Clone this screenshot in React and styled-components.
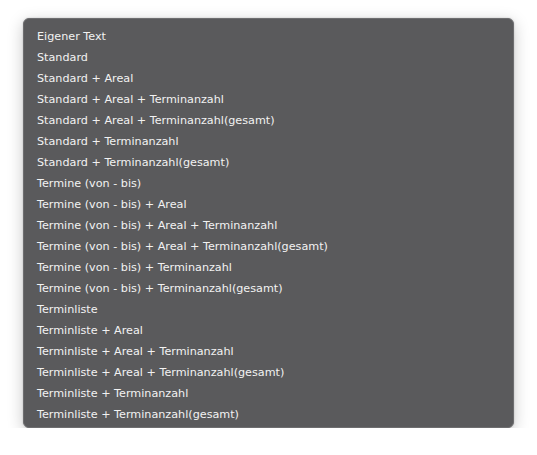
import React from "react";
import styled, { createGlobalStyle } from "styled-components";

const Global = createGlobalStyle`
  html, body { margin: 0; padding: 0; background: #ffffff; }
  body { font-family: "DejaVu Sans", Verdana, sans-serif; }
`;

const Page = styled.div`
  padding: 18px 0 0 23px;
`;

const Menu = styled.ul`
  list-style: none;
  margin: 0;
  width: 491px;
  box-sizing: border-box;
  padding: 6.5px 0 2.5px;
  background: #5a5a5c;
  border: 1px solid #6e6e70;
  border-radius: 6px;
  box-shadow: 0 4px 16px rgba(0, 0, 0, 0.22), 0 0 2px rgba(0, 0, 0, 0.2);
`;

const Item = styled.li`
  height: 21px;
  line-height: 21px;
  padding-left: 13px;
  font-size: 11.2px;
  color: #f2f2f2;
  white-space: nowrap;
`;

const items = [
  "Eigener Text",
  "Standard",
  "Standard + Areal",
  "Standard + Areal + Terminanzahl",
  "Standard + Areal + Terminanzahl(gesamt)",
  "Standard + Terminanzahl",
  "Standard + Terminanzahl(gesamt)",
  "Termine (von - bis)",
  "Termine (von - bis) + Areal",
  "Termine (von - bis) + Areal + Terminanzahl",
  "Termine (von - bis) + Areal + Terminanzahl(gesamt)",
  "Termine (von - bis) + Terminanzahl",
  "Termine (von - bis) + Terminanzahl(gesamt)",
  "Terminliste",
  "Terminliste + Areal",
  "Terminliste + Areal + Terminanzahl",
  "Terminliste + Areal + Terminanzahl(gesamt)",
  "Terminliste + Terminanzahl",
  "Terminliste + Terminanzahl(gesamt)",
];

export default function App() {
  return (
    <>
      <Global />
      <Page>
        <Menu>
          {items.map((t) => (
            <Item key={t}>{t}</Item>
          ))}
        </Menu>
      </Page>
    </>
  );
}
